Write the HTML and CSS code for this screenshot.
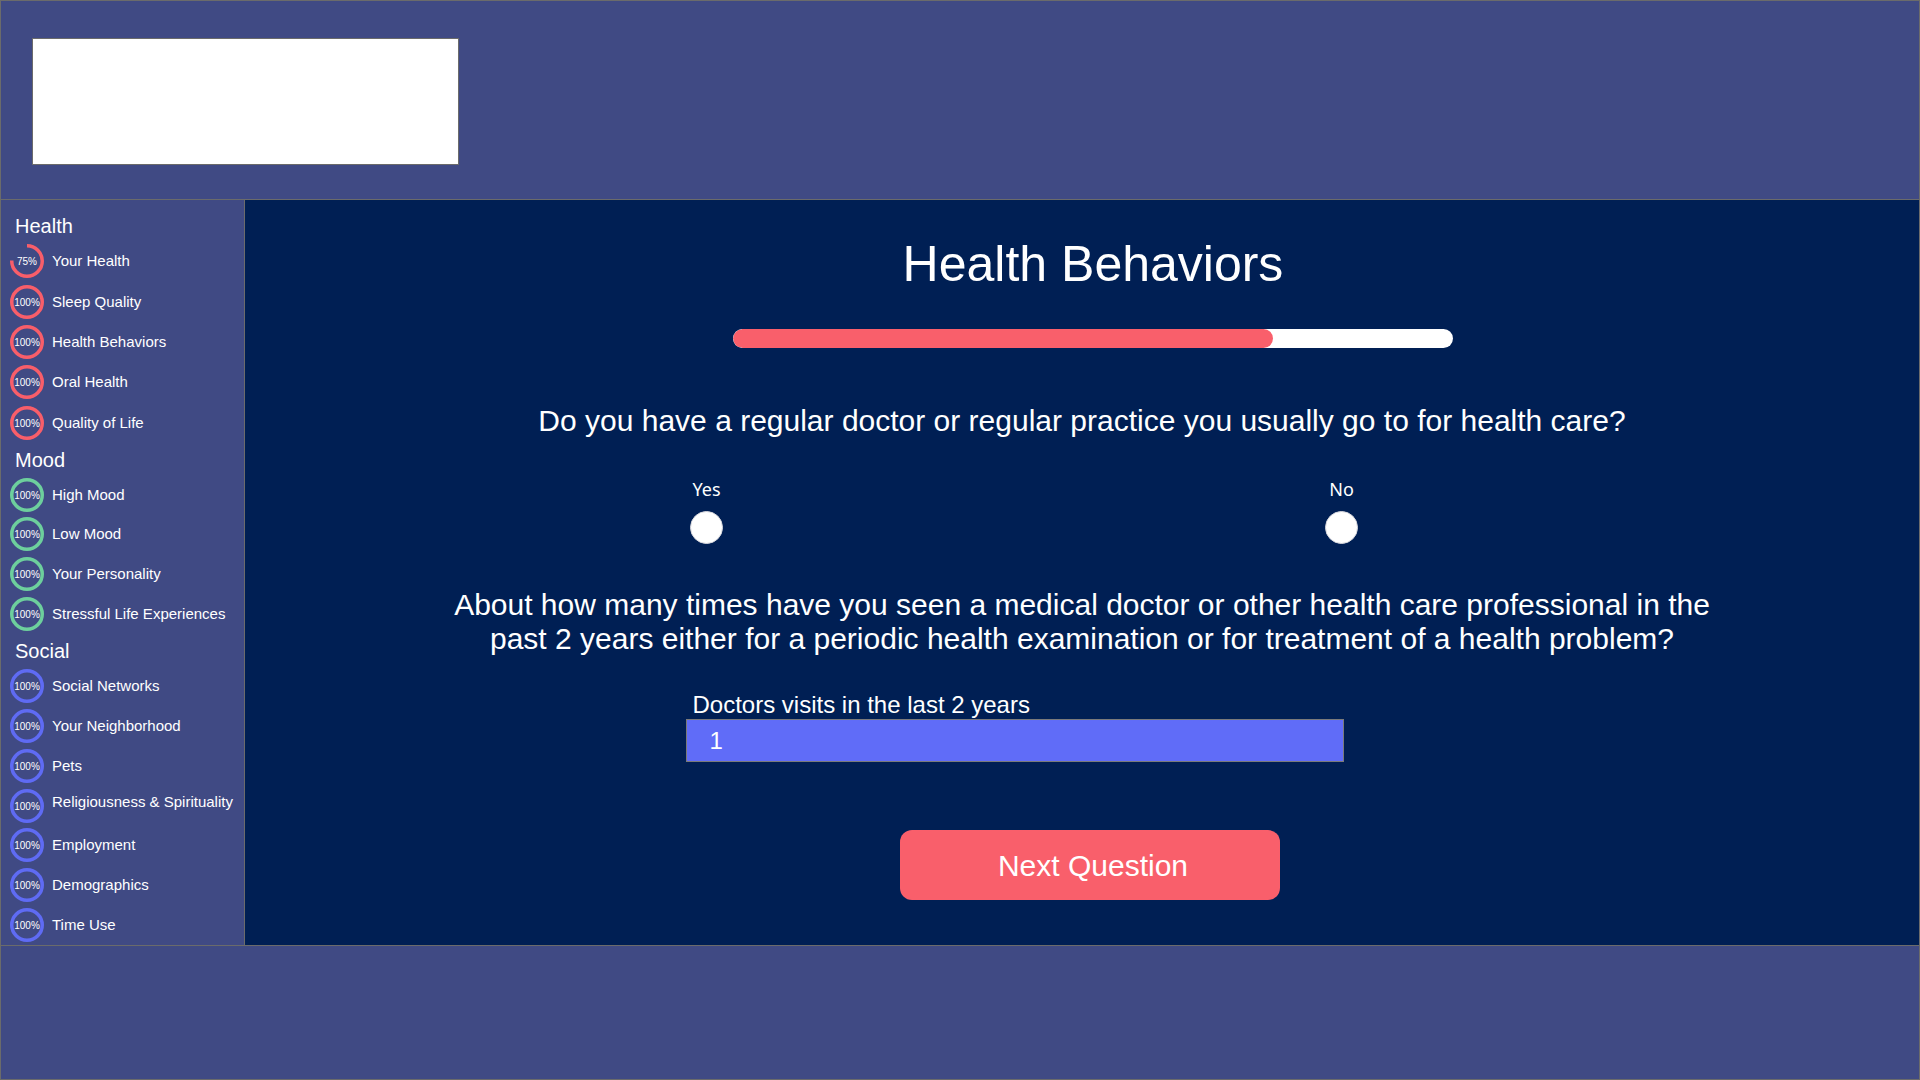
FILE: index.html
```html
<!DOCTYPE html>
<html lang="en">
<head>
<meta charset="utf-8">
<title>Health Behaviors</title>
<link rel="stylesheet" href="styles.css">
</head>
<body>
<div class="app">
  <header class="header">
    <div class="logo"></div>
  </header>
  <div class="body">
    <nav class="sidebar">
      <div class="group-title">Health</div>
      <div class="nav-item health">
        <span class="ring"><svg viewBox="0 0 34 34"><circle class="arc" cx="17" cy="17" r="15.25" style="stroke-dasharray: 71.9 100"/></svg><span class="pct">75%</span></span>
        <span class="label">Your Health</span>
      </div>
      <div class="nav-item health">
        <span class="ring"><svg viewBox="0 0 34 34"><circle class="arc" cx="17" cy="17" r="15.25"/></svg><span class="pct">100%</span></span>
        <span class="label">Sleep Quality</span>
      </div>
      <div class="nav-item health">
        <span class="ring"><svg viewBox="0 0 34 34"><circle class="arc" cx="17" cy="17" r="15.25"/></svg><span class="pct">100%</span></span>
        <span class="label">Health Behaviors</span>
      </div>
      <div class="nav-item health">
        <span class="ring"><svg viewBox="0 0 34 34"><circle class="arc" cx="17" cy="17" r="15.25"/></svg><span class="pct">100%</span></span>
        <span class="label">Oral Health</span>
      </div>
      <div class="nav-item health">
        <span class="ring"><svg viewBox="0 0 34 34"><circle class="arc" cx="17" cy="17" r="15.25"/></svg><span class="pct">100%</span></span>
        <span class="label">Quality of Life</span>
      </div>

      <div class="group-title">Mood</div>
      <div class="nav-item mood">
        <span class="ring"><svg viewBox="0 0 34 34"><circle class="arc" cx="17" cy="17" r="15.25"/></svg><span class="pct">100%</span></span>
        <span class="label">High Mood</span>
      </div>
      <div class="nav-item mood">
        <span class="ring"><svg viewBox="0 0 34 34"><circle class="arc" cx="17" cy="17" r="15.25"/></svg><span class="pct">100%</span></span>
        <span class="label">Low Mood</span>
      </div>
      <div class="nav-item mood">
        <span class="ring"><svg viewBox="0 0 34 34"><circle class="arc" cx="17" cy="17" r="15.25"/></svg><span class="pct">100%</span></span>
        <span class="label">Your Personality</span>
      </div>
      <div class="nav-item mood">
        <span class="ring"><svg viewBox="0 0 34 34"><circle class="arc" cx="17" cy="17" r="15.25"/></svg><span class="pct">100%</span></span>
        <span class="label">Stressful Life Experiences</span>
      </div>

      <div class="group-title">Social</div>
      <div class="nav-item social">
        <span class="ring"><svg viewBox="0 0 34 34"><circle class="arc" cx="17" cy="17" r="15.25"/></svg><span class="pct">100%</span></span>
        <span class="label">Social Networks</span>
      </div>
      <div class="nav-item social">
        <span class="ring"><svg viewBox="0 0 34 34"><circle class="arc" cx="17" cy="17" r="15.25"/></svg><span class="pct">100%</span></span>
        <span class="label">Your Neighborhood</span>
      </div>
      <div class="nav-item social">
        <span class="ring"><svg viewBox="0 0 34 34"><circle class="arc" cx="17" cy="17" r="15.25"/></svg><span class="pct">100%</span></span>
        <span class="label">Pets</span>
      </div>
      <div class="nav-item social">
        <span class="ring"><svg viewBox="0 0 34 34"><circle class="arc" cx="17" cy="17" r="15.25"/></svg><span class="pct">100%</span></span>
        <span class="label raised">Religiousness &amp; Spirituality</span>
      </div>
      <div class="nav-item social">
        <span class="ring"><svg viewBox="0 0 34 34"><circle class="arc" cx="17" cy="17" r="15.25"/></svg><span class="pct">100%</span></span>
        <span class="label">Employment</span>
      </div>
      <div class="nav-item social">
        <span class="ring"><svg viewBox="0 0 34 34"><circle class="arc" cx="17" cy="17" r="15.25"/></svg><span class="pct">100%</span></span>
        <span class="label">Demographics</span>
      </div>
      <div class="nav-item social">
        <span class="ring"><svg viewBox="0 0 34 34"><circle class="arc" cx="17" cy="17" r="15.25"/></svg><span class="pct">100%</span></span>
        <span class="label">Time Use</span>
      </div>
    </nav>

    <main class="main">
      <div class="intro">
        <h1 class="title">Health Behaviors</h1>
        <div class="progress"><div class="progress-fill" style="width: 75%"></div></div>
      </div>

      <p class="question q-first">Do you have a regular doctor or regular practice you usually go to for health care?</p>

      <div class="options">
        <label class="option">
          <span class="option-text">Yes</span>
          <input class="radio" type="radio" name="regular-doctor" value="yes">
        </label>
        <label class="option">
          <span class="option-text">No</span>
          <input class="radio" type="radio" name="regular-doctor" value="no">
        </label>
      </div>

      <p class="question q-second">About how many times have you seen a medical doctor or other health care professional in the past 2 years either for a periodic health examination or for treatment of a health problem?</p>

      <div class="field">
        <label class="field-label" for="visits">Doctors visits in the last 2 years</label>
        <input class="field-input" id="visits" type="text" value="1">
      </div>

      <button class="next-btn" type="button">Next Question</button>
    </main>
  </div>
  <footer class="footer"></footer>
</div>
</body>
</html>
```

FILE: styles.css
```css
* {
  box-sizing: border-box;
}

html, body {
  margin: 0;
  padding: 0;
}

body {
  width: 1920px;
  height: 1080px;
  overflow: hidden;
  font-family: "Liberation Sans", Arial, sans-serif;
  color: #ffffff;
  background: #404a84;
}

.app {
  width: 1920px;
  height: 1080px;
  border: 1px solid #6b6b6b;
  display: flex;
  flex-direction: column;
  background: #404a84;
}

/* Header */
.header {
  height: 199px;
  flex: none;
  border-bottom: 1px solid #6b6b6b;
  padding: 37px 0 0 31px;
}

.logo {
  width: 427px;
  height: 127px;
  background: #ffffff;
  border: 1px solid #6b6b6b;
}

/* Body row */
.body {
  height: 745px;
  flex: none;
  display: flex;
}

.sidebar {
  width: 244px;
  flex: none;
  border-right: 1px solid #6b6b6b;
  background: #404a84;
  padding: 9px 0 0 9px;
  display: flex;
  flex-direction: column;
}

.group-title {
  height: 32px;
  padding: 3px 0 0 5px;
  font-size: 20px;
  line-height: 29px;
}

.nav-item {
  height: 40px;
  display: flex;
  align-items: center;
  gap: 8px;
}

.nav-item.health {
  height: 40.5px;
}

.ring {
  width: 34px;
  height: 34px;
  flex: none;
  display: grid;
  place-items: center;
}

.ring svg {
  grid-area: 1 / 1;
  width: 34px;
  height: 34px;
  transform: rotate(-90deg);
}

.ring .arc {
  fill: none;
  stroke-width: 3.5;
}

.health .arc { stroke: #f85e6a; }
.mood .arc { stroke: #6dcf9d; }
.social .arc { stroke: #5f6bf4; }

.pct {
  grid-area: 1 / 1;
  font-size: 10px;
  line-height: 10px;
  color: #ffffff;
  margin-top: 2px;
}

.label {
  font-size: 15px;
  line-height: 18px;
  color: #ffffff;
  white-space: nowrap;
}

.label.raised {
  margin-top: -8px;
}

/* Main content */
.main {
  flex: 1;
  background: #001f54;
  display: flex;
  flex-direction: column;
  align-items: center;
  padding-top: 39px;
}

.intro {
  width: 720px;
  margin-left: 22px;
  display: flex;
  flex-direction: column;
  align-items: center;
}

.title {
  margin: 0;
  font-size: 50px;
  line-height: 50px;
  font-weight: normal;
  white-space: nowrap;
}

.progress {
  width: 720px;
  height: 19px;
  margin-top: 40px;
  background: #ffffff;
  border-radius: 10px;
  overflow: hidden;
}

.progress-fill {
  height: 100%;
  background: #f95f6b;
  border-radius: 10px;
}

.question {
  margin: 0;
  font-size: 30px;
  line-height: 34px;
  text-align: center;
  max-width: 1290px;
}

.q-first {
  margin-top: 56px;
}

.options {
  width: 735px;
  margin: 39px 116px 0 0;
  display: flex;
  justify-content: space-between;
}

.option {
  width: 100px;
  display: flex;
  flex-direction: column;
  align-items: center;
}

.option-text {
  font-family: "Noto Sans", "Open Sans", sans-serif;
  font-size: 18px;
  line-height: 24px;
}

.radio {
  appearance: none;
  -webkit-appearance: none;
  width: 33px;
  height: 33px;
  margin: 10px 0 0;
  border-radius: 50%;
  background: #ffffff;
  border: 1px solid #d9d9de;
}

.q-second {
  margin-top: 44px;
}

.field {
  width: 658px;
  margin: 35px 135px 0 0;
  display: flex;
  flex-direction: column;
}

.field-label {
  padding-left: 7px;
  font-size: 24px;
  line-height: 28px;
}

.field-input {
  height: 43px;
  width: 100%;
  margin: 0;
  padding: 0 0 0 23px;
  border: 1px solid #7a7a7a;
  background: #606cf8;
  color: #ffffff;
  font-family: "Liberation Sans", Arial, sans-serif;
  font-size: 24px;
  outline: none;
}

.next-btn {
  width: 380px;
  height: 70px;
  margin: 68px 0 0 15px;
  padding: 2px 0 0 7px;
  border: none;
  border-radius: 12px;
  background: #f95f6b;
  color: #ffffff;
  font-family: "Liberation Sans", Arial, sans-serif;
  font-size: 30px;
  cursor: pointer;
}

/* Footer */
.footer {
  flex: 1;
  border-top: 1px solid #6b6b6b;
  background: #404a84;
}
```
